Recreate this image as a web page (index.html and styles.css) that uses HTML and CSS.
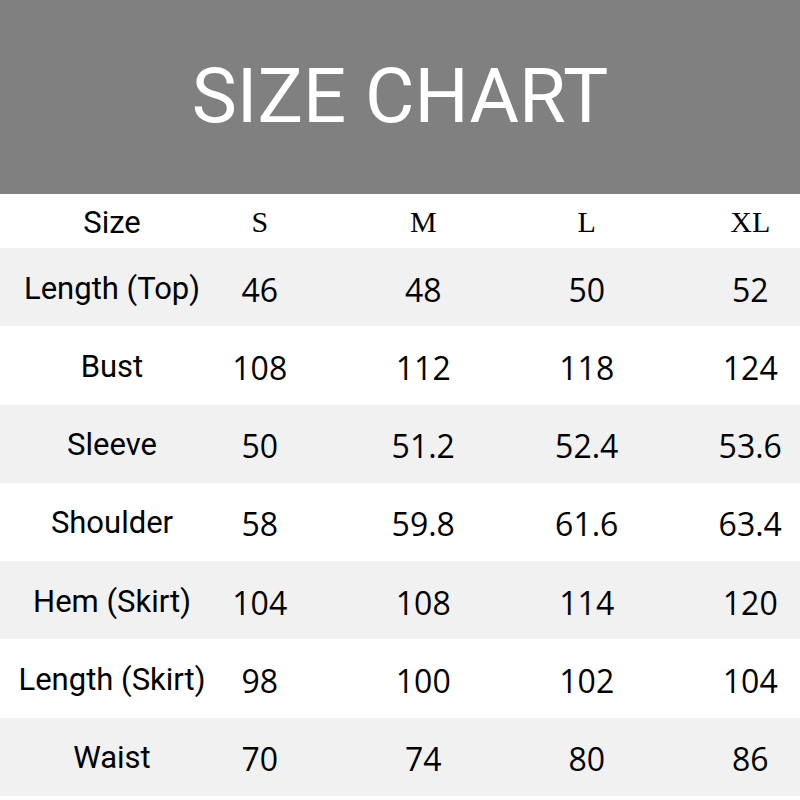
FILE: index.html
```html
<!DOCTYPE html>
<html>
<head>
<meta charset="utf-8">
<link rel="stylesheet" href="styles.css">
</head>
<body>
<div class="page">
  <header class="banner"><h1 class="title">SIZE CHART</h1></header>
  <div class="row head">
    <div class="cell label">Size</div>
    <div class="cell size">S</div>
    <div class="cell size">M</div>
    <div class="cell size">L</div>
    <div class="cell size last">XL</div>
  </div>
  <div class="rows">
    <div class="row alt"><div class="cell label">Length (Top)</div><div class="cell val">46</div><div class="cell val">48</div><div class="cell val">50</div><div class="cell val last">52</div></div>
    <div class="row"><div class="cell label">Bust</div><div class="cell val">108</div><div class="cell val">112</div><div class="cell val">118</div><div class="cell val last">124</div></div>
    <div class="row alt"><div class="cell label">Sleeve</div><div class="cell val">50</div><div class="cell val">51.2</div><div class="cell val">52.4</div><div class="cell val last">53.6</div></div>
    <div class="row"><div class="cell label">Shoulder</div><div class="cell val">58</div><div class="cell val">59.8</div><div class="cell val">61.6</div><div class="cell val last">63.4</div></div>
    <div class="row alt"><div class="cell label">Hem (Skirt)</div><div class="cell val">104</div><div class="cell val">108</div><div class="cell val">114</div><div class="cell val last">120</div></div>
    <div class="row"><div class="cell label">Length (Skirt)</div><div class="cell val">98</div><div class="cell val">100</div><div class="cell val">102</div><div class="cell val last">104</div></div>
    <div class="row alt"><div class="cell label">Waist</div><div class="cell val">70</div><div class="cell val">74</div><div class="cell val">80</div><div class="cell val last">86</div></div>
  </div>
</div>
</body>
</html>
```
FILE: styles.css
```css
html, body {
  margin: 0;
  padding: 0;
  background: #ffffff;
  overflow: hidden;
}
.page {
  width: 800px;
  height: 800px;
  display: flex;
  flex-direction: column;
}
.banner {
  height: 194px;
  background: #808080;
  display: flex;
  align-items: center;
  justify-content: center;
}
.title {
  margin: 0;
  font-family: Roboto, "Liberation Sans", sans-serif;
  font-weight: 400;
  font-size: 76px;
  color: #ffffff;
  line-height: 1;
  padding-bottom: 2px;
}
.row {
  display: grid;
  grid-template-columns: 178px 163.5px 163.5px 163.5px 131.5px;
  align-items: center;
  color: #000;
}
.head {
  height: 54px;
}
.rows {
  height: 548px;
  display: grid;
  grid-template-rows: repeat(7, 1fr);
}
.alt {
  background: #f1f1f1;
}
.cell {
  text-align: center;
  white-space: nowrap;
}
.label {
  margin-right: -46px;
  font-family: Roboto, "Liberation Sans", sans-serif;
  font-size: 31px;
  padding-top: 2px;
}
.last {
  margin-right: -32px;
}
.size {
  font-family: "Liberation Serif", serif;
  font-size: 30px;
  padding-top: 2px;
}
.val {
  font-family: "Open Sans", "Liberation Sans", sans-serif;
  font-size: 32px;
  padding-top: 4px;
}
```
